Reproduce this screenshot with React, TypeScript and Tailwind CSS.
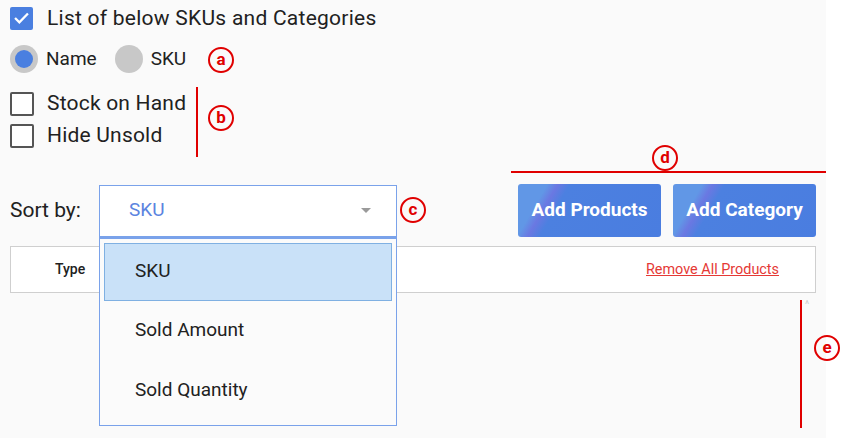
import React from 'react';

const font = { fontFamily: 'Roboto, "Liberation Sans", sans-serif' };

const Badge = ({ letter, className }: { letter: string; className: string }) => (
  <div
    className={`absolute w-[26px] h-[26px] rounded-full border-2 border-[#e00000] flex items-center justify-center text-[#e00000] text-[17px] font-bold leading-none pb-[2px] ${className}`}
  >
    {letter}
  </div>
);

const Checkbox = ({ checked }: { checked?: boolean }) =>
  checked ? (
    <div className="w-[23px] h-[23px] rounded-[2px] bg-[#4a7fe0] flex items-center justify-center">
      <svg width="17" height="17" viewBox="0 0 24 24" fill="none" stroke="white" strokeWidth="3.2" strokeLinecap="square">
        <path d="M4 12.5l5 5L20 6" />
      </svg>
    </div>
  ) : (
    <div className="w-[24px] h-[24px] rounded-[2px] border-2 border-[#555] bg-white" />
  );

const Radio = ({ checked }: { checked?: boolean }) => (
  <div className="w-[28px] h-[28px] rounded-full bg-[#c8c8c8] flex items-center justify-center">
    {checked && <div className="w-[18px] h-[18px] rounded-full bg-[#4a7fe0]" />}
  </div>
);

const btn =
  'w-[143px] h-[53px] rounded-[3px] text-white text-[19px] font-bold flex items-center justify-center bg-[linear-gradient(120deg,#6197e6_0%,#6197e6_17%,#6a78e2_23%,#4c80e0_30%,#4a7de0_100%)]';

export default function App() {
  return (
    <div className="relative w-[844px] h-[438px] bg-white overflow-hidden text-[#212121]" style={font}>
      <div className="w-[826px] h-full bg-[#fafafa] pt-[7px] pl-[10px] pr-[10px]">
        <div className="flex items-center gap-[14px] h-[23px]">
          <Checkbox checked />
          <span className="text-[21px] tracking-[0.25px]">List of below SKUs and Categories</span>
        </div>

        <div className="flex items-center h-[28px] mt-[15px]">
          <Radio checked />
          <span className="text-[19px] ml-[8px]">Name</span>
          <div className="ml-[18px]">
            <Radio />
          </div>
          <span className="text-[19px] ml-[8px]">SKU</span>
        </div>

        <div className="flex items-center gap-[13px] h-[24px] mt-[19px]">
          <Checkbox />
          <span className="text-[21px] tracking-[0.2px]">Stock on Hand</span>
        </div>
        <div className="flex items-center gap-[13px] h-[24px] mt-[8px]">
          <Checkbox />
          <span className="text-[21px] tracking-[0.2px]">Hide Unsold</span>
        </div>

        <div className="flex items-center h-[53px] mt-[36px]">
          <span className="w-[89px] text-[21px]">Sort by:</span>
          <div className="relative w-[298px] h-[52px]">
            <div className="h-full border border-[#7aa2ea] bg-white flex items-center pl-[29px] pr-[25px]">
              <span className="text-[19px] text-[#5b84e0]">SKU</span>
              <div className="ml-auto w-0 h-0 border-l-[5px] border-r-[5px] border-t-[5px] border-l-transparent border-r-transparent border-t-[#9a9a9a]" />
            </div>
            <div className="absolute left-0 top-full w-full h-[189px] bg-[#fbfbfb] border border-t-2 border-[#7aa2ea] z-10 pt-[4px] px-[4px]">
              <div className="h-[58px] bg-[#c9e1f8] border border-[#7fb0e2] flex items-center pl-[30px] text-[19px]">SKU</div>
              <div className="h-[60px] flex items-center pl-[31px] text-[19px]">Sold Amount</div>
              <div className="h-[60px] flex items-center pl-[31px] text-[19px]">Sold Quantity</div>
            </div>
          </div>
          <div className="ml-auto flex gap-[12px]">
            <button className={btn}>Add Products</button>
            <button className={btn}>Add Category</button>
          </div>
        </div>

        <div className="mt-[9px] h-[47px] border border-[#cfcfcf] bg-white flex items-center pl-[44px] pr-[36px]">
          <span className="text-[14px] font-medium">Type</span>
          <span className="ml-auto text-[14.4px] text-[#e53935] underline">Remove All Products</span>
        </div>
      </div>

      <div className="absolute left-[805px] top-[297px] text-[#cfcfcf] text-[10px]">^</div>

      {/* annotations */}
      <Badge letter="a" className="left-[208px] top-[47px]" />
      <div className="absolute left-[196px] top-[87px] w-[2px] h-[70px] bg-[#e00000]" />
      <Badge letter="b" className="left-[208px] top-[105px]" />
      <Badge letter="c" className="left-[400px] top-[197px]" />
      <Badge letter="d" className="left-[652px] top-[145px]" />
      <div className="absolute left-[511px] top-[171px] w-[315px] h-[2px] bg-[#e00000]" />
      <div className="absolute left-[800px] top-[300px] w-[2px] h-[128px] bg-[#e00000]" />
      <Badge letter="e" className="left-[814px] top-[335px]" />
    </div>
  );
}
